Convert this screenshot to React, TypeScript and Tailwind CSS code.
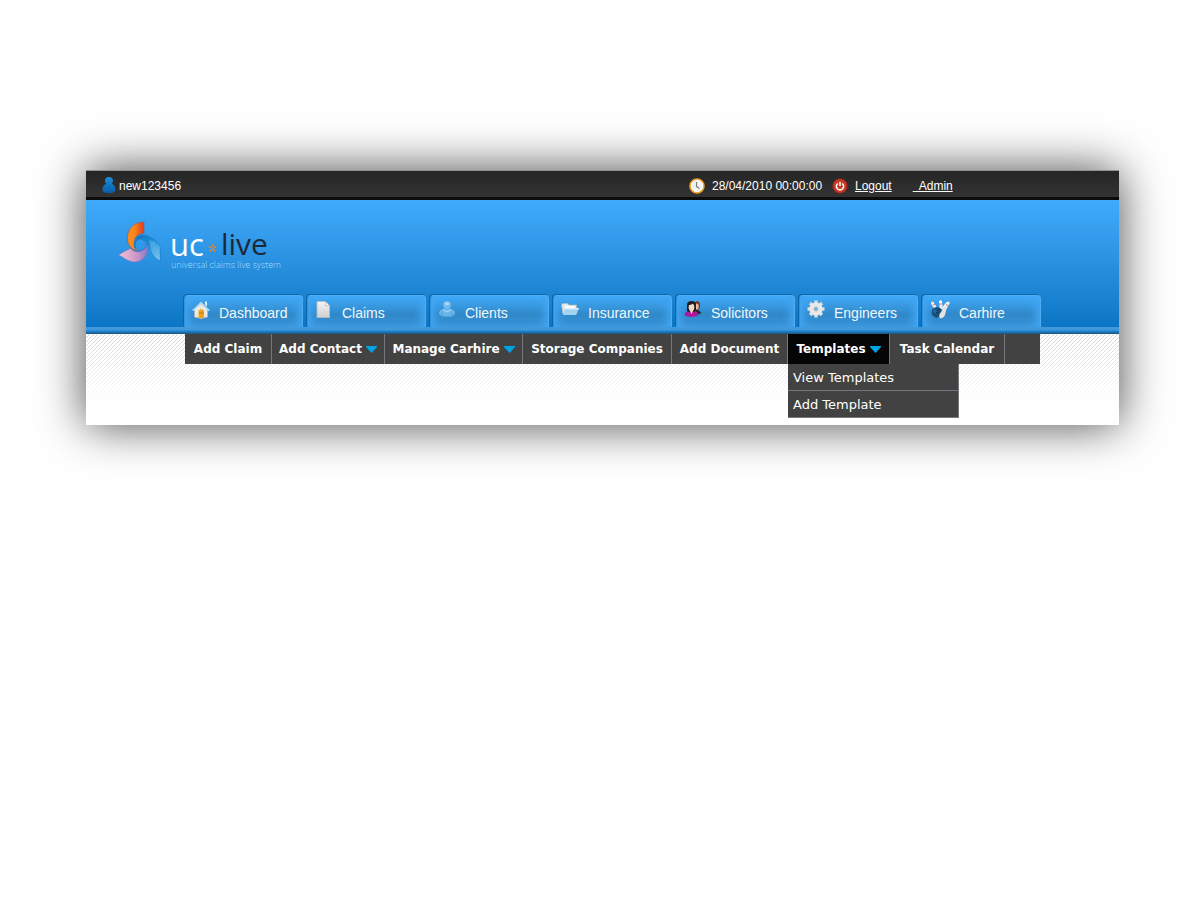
import React from 'react';

function UserIcon() {
  return (
    <svg width="14" height="18" viewBox="0 0 14 18" aria-hidden="true">
      <defs>
        <linearGradient id="user" x1="0" y1="0" x2="0" y2="1">
          <stop offset="0" stopColor="#1c8fd6" />
          <stop offset="1" stopColor="#0a5ca8" />
        </linearGradient>
      </defs>
      <path d="M7 0C9.600 0 11 1.600 11 3.500C11 5 10.400 6 9.700 6.800C12.300 7.600 13.500 10 13.500 13C13.500 15.500 10 16 7 16C4 16 .5 15.500 .5 13C.5 10 1.700 7.600 4.300 6.800C3.600 6 3 5 3 3.500C3 1.600 4.400 0 7 0Z" fill="url(#user)" />
    </svg>
  );
}

function ClockIcon() {
  return (
    <svg width="16" height="16" viewBox="0 0 16 16" aria-hidden="true">
      <circle cx="8" cy="8" r="6.900" fill="#f4f4f4" stroke="#f0a02a" strokeWidth="1.800" />
      <circle cx="8" cy="8" r="5.700" fill="#f4f4f4" stroke="#fff" strokeWidth=".8" />
      <path d="M7.500 4v4.500l3 2" fill="none" stroke="#777" strokeWidth="1.200" />
    </svg>
  );
}

function PowerIcon() {
  return (
    <svg width="16" height="16" viewBox="0 0 16 16" aria-hidden="true">
      <circle cx="8" cy="8" r="7.600" fill="#a82a1c" />
      <circle cx="8" cy="8" r="6.400" fill="#c93a28" />
      <path d="M5.800 5.500A3.600 3.600 0 1 0 10.200 5.500M8 4v4" fill="none" stroke="#fff" strokeWidth="1.500" />
    </svg>
  );
}

function HouseIcon() {
  return (
    <svg width="18" height="20" viewBox="0 0 18 20" aria-hidden="true">
      <path d="M13 1.500h2v6h-2z" fill="#d9edf9" />
      <path d="M2.500 9L9 3.500L15.500 9V17L9 18.500L2.500 17Z" fill="#ece8e4" stroke="#b8b8b8" strokeWidth=".7" />
      <path d="M6.500 10.500L9 9L12 10.500V18L6.500 18Z" fill="#eda41d" />
      <path d="M7 13h4.500" stroke="#c9780d" />
      <path d="M.8 10.500L9 2.200L17.200 10.500" fill="none" stroke="#a5dbfa" strokeWidth="1.800" />
      <path d="M1 9L9 1L17 9" fill="none" stroke="#3489c6" strokeWidth=".7" />
    </svg>
  );
}

function PageIcon() {
  return (
    <svg width="18" height="20" viewBox="0 0 18 20" aria-hidden="true">
      <defs>
        <linearGradient id="page" x1="0" y1="0" x2="0" y2="1">
          <stop offset="0" stopColor="#f4f4f4" />
          <stop offset="1" stopColor="#cfcfcf" />
        </linearGradient>
      </defs>
      <path d="M2 1.500H10.500L14.500 5.500V17.500H2Z" fill="url(#page)" stroke="#bdbdbd" strokeWidth=".8" />
      <path d="M10.500 1.500V5.500H14.500Z" fill="#fff" stroke="#aaa" strokeWidth=".6" />
    </svg>
  );
}

function ClientIcon() {
  return (
    <svg width="18" height="20" viewBox="0 0 18 20" aria-hidden="true">
      <path d="M1 14C1 10 4 8.500 9 8.500C14 8.500 17 10 17 14L14 16.500H4Z" fill="#6db5e9" />
      <path d="M5 9.500L9 12L13 9.500" fill="none" stroke="#b3defa" strokeWidth="1" />
      <path d="M4 12.500V16M14 12.500V16" stroke="#4596d3" strokeWidth=".8" />
      <circle cx="9" cy="4.800" r="3.900" fill="#75bbed" />
      <ellipse cx="9" cy="3.600" rx="2.500" ry="1.700" fill="#a6d6f8" />
    </svg>
  );
}

function FolderIcon() {
  return (
    <svg width="18" height="20" viewBox="0 0 18 20" aria-hidden="true">
      <path d="M.5 5L1.500 3.500H7L8 5H15.500V14H2Z" fill="#e4e8ea" stroke="#b0b8be" strokeWidth=".6" />
      <path d="M4 6H14V9H4Z" fill="#fff" />
      <path d="M4 8H18L15 15H2Z" fill="#a0d2f2" />
      <path d="M4 8H18L17.500 9.500H3.600Z" fill="#d5edfc" />
    </svg>
  );
}

function PeopleIcon() {
  return (
    <svg width="18" height="20" viewBox="0 0 18 20" aria-hidden="true">
      <path d="M10 9L15 10.500L17.500 13L14 14.500Z" fill="#2b2527" />
      <ellipse cx="13" cy="5.500" rx="3" ry="4.300" fill="#743022" />
      <ellipse cx="12.800" cy="6.500" rx="1.900" ry="3" fill="#e9b99f" />
      <path d="M.5 15.500C.5 12 3.500 10.700 7.500 10.700C11 10.700 14 12 14 16L7 17Z" fill="#ae169b" />
      <path d="M3 11V5C3 2 5 1 7.500 1C10.500 1 12 3 12 5V11L9.500 12H5Z" fill="#211c20" />
      <ellipse cx="7.500" cy="7.200" rx="2.800" ry="4" fill="#f5d8c6" />
      <path d="M4.600 5C6 5 8 4.500 9 3.200L10.500 6V3L7 2L4.500 3Z" fill="#211c20" />
      <path d="M6 11L7.500 14L9 11Z" fill="#f5d8c6" />
    </svg>
  );
}

function GearIcon() {
  return (
    <svg width="18" height="20" viewBox="0 0 18 20" aria-hidden="true">
      <g stroke="#dedede" strokeWidth="3.400">
        <path d="M9 0.500V17.500M.5 9H17.500M3 3L15 15M15 3L3 15" />
      </g>
      <circle cx="9" cy="9" r="6.600" fill="#e8e8e8" />
      <circle cx="9" cy="9" r="2.200" fill="#5fa8dc" stroke="#cfcfcf" />
    </svg>
  );
}

function BowlingIcon() {
  return (
    <svg width="20" height="20" viewBox="0 0 20 20" aria-hidden="true">
      <g fill="#f1eeee">
        <path d="M1.500 3C1 5 4 7 5 10L8 9L4 3Z" />
        <path d="M9.500 1L11.500 1L12.500 5L12.500 9L9.500 8Z" />
        <path d="M16 2.500L19 4L15.500 11L11 9Z" />
      </g>
      <circle cx="2.500" cy="3" r="1.500" fill="#ececec" />
      <circle cx="10.500" cy="1.800" r="1.500" fill="#fff" />
      <circle cx="18" cy="3" r="1.600" fill="#fff" />
      <path d="M9.300 4H11.900M16 4.500L18 5.500M3 5L5 4.200" stroke="#d36a68" strokeWidth=".9" />
      <circle cx="6.800" cy="12.300" r="5.200" fill="#174f7c" />
      <circle cx="5.300" cy="11" r="1.900" fill="#2d6c9c" />
      <path d="M5.500 10.500h1M7.500 10h1M6.500 12.500h1" stroke="#0b2742" />
      <path d="M15.500 7C17 8 16 10 15.500 13C15 17 12 19 10 18C8.500 17 9 14 11 12C13 10 13 7 15.500 7Z" fill="#e4e1e1" />
    </svg>
  );
}

function LogoMark() {
  return (
    <svg width="44" height="44" viewBox="0 0 44 44" aria-hidden="true">
      <defs>
        <linearGradient id="flame" x1="0" x2="1">
          <stop offset="0.400" stopColor="#fb8a1c" />
          <stop offset="0.900" stopColor="#e8451f" />
        </linearGradient>
        <linearGradient id="wave" x1="0" y1="0" x2="1" y2="1">
          <stop offset="0" stopColor="#0f78c4" />
          <stop offset="0.450" stopColor="#1b8dd6" />
          <stop offset="1" stopColor="#8dd2f8" />
        </linearGradient>
        <linearGradient id="petal" x1="0" x2="1">
          <stop offset="0" stopColor="#f0c2d6" />
          <stop offset="0.600" stopColor="#cf98c8" />
          <stop offset="1" stopColor="#8a78c4" />
        </linearGradient>
      </defs>
      <path d="M26 2V13C20 14 16 17 16 23C16 26 17 29 19 31C12 29 8.500 23 9.500 16C10.500 8 16 2 26 2Z" fill="url(#flame)" stroke="#7b5a78" strokeWidth=".6" />
      <path d="M42 41C38 38 34 36 31.500 29C30 23 25 17 17 19C20 14 27 14 32 17C36 19 39 22 42 26Z" fill="url(#wave)" stroke="#1672b8" strokeWidth=".5" />
      <path d="M31 20L37 22L41.500 39L34 32Z" fill="#5bb4ea" opacity=".6" />
      <path d="M.5 35C5 32 9 30 12.500 28.500C17 34 25 33 29.500 25.500C31 34 25 42 17 42C10 42 7 38 .5 35Z" fill="url(#petal)" stroke="#7476bd" strokeWidth=".6" />
      <path d="M17 28C15.500 23 18 18.500 24 17.500" fill="none" stroke="#1971b6" strokeWidth="1.200" />
      <path d="M20 31C26 31 29 27 28.500 22" fill="none" stroke="#4a72c0" strokeWidth="1" />
    </svg>
  );
}

function Asterisk() {
  return (
    <svg width="9" height="10" viewBox="0 0 10 10" aria-hidden="true">
      <path d="M5 5V0.500M5 5L0.800 3.800M5 5L9.200 3.800M5 5L2 9M5 5L8 9" stroke="#d8893c" strokeWidth="1.500" />
      <circle cx="5" cy="5" r="1" fill="#3a8bc9" />
    </svg>
  );
}

function Arrow() {
  return (
    <svg width="11" height="7" viewBox="0 0 11 7" aria-hidden="true">
      <path d="M0 0H11V1L5.500 7L0 1Z" fill="#00a4e4" />
    </svg>
  );
}

const tabs = [
  { label: 'Dashboard', icon: <HouseIcon /> },
  { label: 'Claims', icon: <PageIcon /> },
  { label: 'Clients', icon: <ClientIcon /> },
  { label: 'Insurance', icon: <FolderIcon /> },
  { label: 'Solicitors', icon: <PeopleIcon /> },
  { label: 'Engineers', icon: <GearIcon /> },
  { label: 'Carhire', icon: <BowlingIcon /> },
];

const links: { label: string; width: string; menu?: string[] }[] = [
  { label: 'Add Claim', width: 'w-[87px]' },
  { label: 'Add Contact', width: 'w-[113px]', menu: [] },
  { label: 'Manage Carhire', width: 'w-[138px]', menu: [] },
  { label: 'Storage Companies', width: 'w-[149px]' },
  { label: 'Add Document', width: 'w-[116px]' },
  { label: 'Templates', width: 'w-[102px]', menu: ['View Templates', 'Add Template'] },
  { label: 'Task Calendar', width: 'w-[115px]' },
];

function Stripes() {
  return (
    <svg
      className="absolute inset-x-0 top-0 h-[70px] w-full [mask-image:linear-gradient(to_bottom,black,transparent)]"
      aria-hidden="true"
    >
      <defs>
        <pattern id="stripes" width="4" height="4" patternUnits="userSpaceOnUse">
          <path d="M3 0h1v1h-1zM2 1h1v1h-1zM1 2h1v1h-1zM0 3h1v1h-1z" fill="#d4d4d4" shapeRendering="crispEdges" />
        </pattern>
      </defs>
      <rect width="100%" height="100%" fill="url(#stripes)" />
    </svg>
  );
}

export default function App() {
  return (
    <div className="min-h-screen bg-white pt-[170px] pr-[81px] pb-12 pl-[86px] font-['Liberation_Sans',Arial,sans-serif]">
      <div className="bg-white shadow-[0_0_44px_rgba(0,0,0,0.72)]">
        <div className="flex h-[30px] items-center border-t border-b-3 border-t-[#8f9490] border-b-[#0c0c0c] bg-linear-to-b from-[#252525] to-[#333333] pt-[3px] pl-4 text-xs text-white">
          <div className="flex w-[587px] items-center gap-[3px]">
            <UserIcon />
            <span>new123456</span>
          </div>
          <div className="flex items-center gap-[7px]">
            <ClockIcon />
            <span className="w-[113px]">28/04/2010 00:00:00</span>
            <PowerIcon />
            <a href="#logout" className="underline">Logout</a>
            <a href="#admin" className="ml-3.5 whitespace-pre underline">{'\u00a0 Admin'}</a>
          </div>
        </div>

        <header className="flex h-[127px] flex-col justify-between bg-linear-to-b from-[#40abfb] to-[#0a76c5]">
          <a href="#home" className="flex w-fit items-start pt-5 pl-8" aria-label="uc live">
            <LogoMark />
            <span className="ml-2 flex flex-col font-['Open_Sans','Noto_Sans',sans-serif]">
              <span className="flex h-10 items-center pt-2 text-[31px] leading-8 text-white">
                <span>uc</span>
                <span className="mt-2 mr-1 ml-1">
                  <Asterisk />
                </span>
                <span className="text-[30px] text-[#1d2a36]">live</span>
              </span>
              <span className="pl-px text-[9px] leading-[10px] font-light text-[#a5dcff]">universal claims live system</span>
            </span>
          </a>
          <nav className="flex gap-1 pl-[98px]" aria-label="Main">
            {tabs.map((tab) => (
              <a
                key={tab.label}
                href="#tab"
                className="flex h-8 w-[119px] items-center gap-[9px] rounded-t border border-b-0 border-[#4fadf3] border-l-[#2f92da] bg-linear-to-b from-[#42abfb] via-[#2f88c8] via-60% to-[#3b94d8] pl-[7px] text-sm text-[#f0f7fd] shadow-[-1px_-1px_0_#0c66ad,inset_8px_0_8px_-4px_#42a6f2,inset_-8px_0_8px_-4px_#42a6f2]"
              >
                <span className="pb-1">{tab.icon}</span>
                <span className="pt-[3px]">{tab.label}</span>
              </a>
            ))}
          </nav>
        </header>
        <div className="h-[7px] bg-linear-to-b from-[#4099da] from-40% via-[#1d83d0] via-60% to-[#1c5480]" />

        <div className="relative h-[91px]">
          <Stripes />
          <nav
            className="relative mr-[79px] ml-[99px] flex h-[30px] bg-[#424242] font-['DejaVu_Sans',Verdana,sans-serif] text-xs font-bold text-white"
            aria-label="Section"
          >
            {links.map((link) => (
              <div
                key={link.label}
                className={`relative flex shrink-0 border-r border-[#777480] ${link.width} ${link.menu?.length ? 'bg-[#050505]' : ''}`}
              >
                <a
                  href="#section"
                  className="flex flex-1 items-center justify-center gap-1 whitespace-nowrap"
                >
                  {link.label}
                  {link.menu && <Arrow />}
                </a>
                {link.menu && link.menu.length > 0 && (
                  <div className="absolute top-[30px] left-0 w-[171px] border-r border-[#777780] bg-[#424242] text-[13px] font-normal">
                    {link.menu.map((item) => (
                      <a key={item} href="#item" className="flex h-[27px] items-center border-b border-[#777780] pt-px pl-[5px]">
                        {item}
                      </a>
                    ))}
                  </div>
                )}
              </div>
            ))}
          </nav>
        </div>
      </div>
    </div>
  );
}
